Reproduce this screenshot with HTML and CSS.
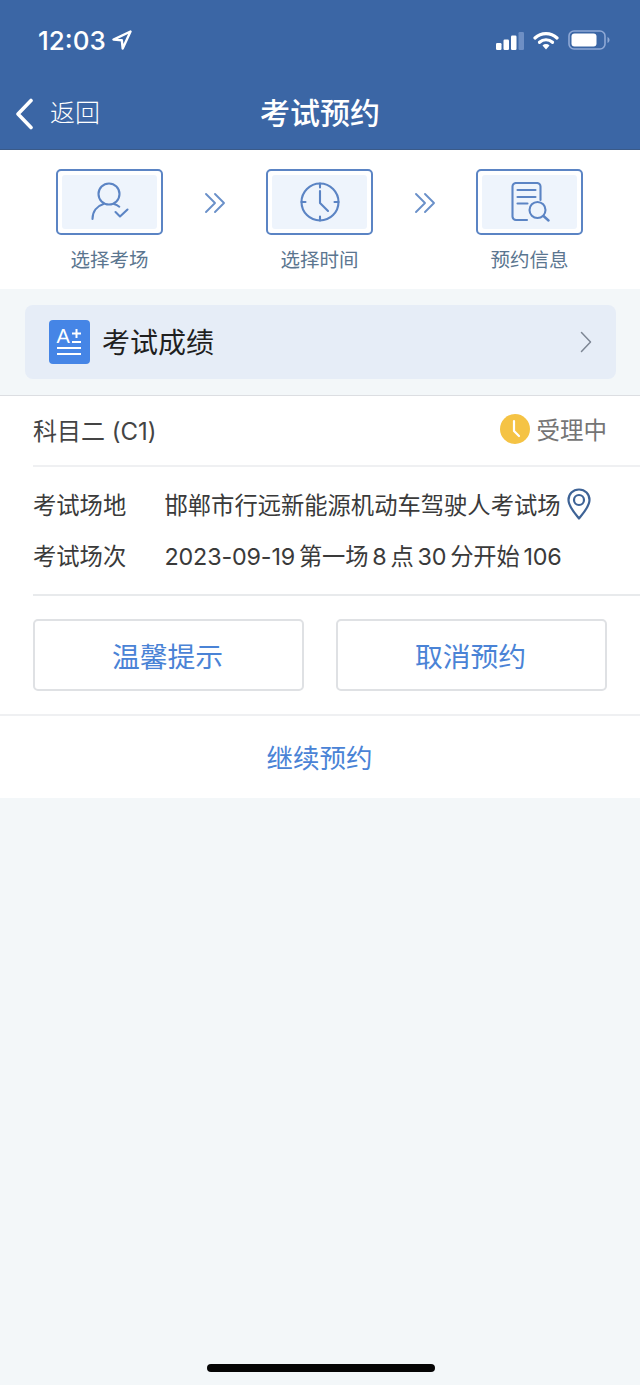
FILE: index.html
```html
<!DOCTYPE html>
<html lang="zh-CN">
<head>
    <meta charset="UTF-8">
    <meta name="viewport" content="width=device-width, initial-scale=1.0">
    <title>考试预约</title>
    <link rel="stylesheet" href="styles.css">
</head>
<body>
    <div class="page">
        <!-- Header -->
        <div class="header">
            <div class="status-bar">
                <div class="status-time">
                    <span>12:03</span>
                    <svg class="icon-location" viewBox="0 0 20 20"><path d="M18.5 1.5 1.5 9.6l8.3.6.9 8.3z" fill="none" stroke="#fff" stroke-width="2.4" stroke-linejoin="round"/></svg>
                </div>
                <div class="status-icons">
                    <svg class="icon-signal" viewBox="0 0 28 18">
                        <rect x="0" y="11" width="5.5" height="7" rx="1.2" fill="#fff"/>
                        <rect x="7.500" y="7.500" width="5.500" height="10.500" rx="1.200" fill="#fff"/>
                        <rect x="15" y="3.500" width="5.500" height="14.500" rx="1.200" fill="#fff"/>
                        <rect x="22.500" y="0" width="5.500" height="18" rx="1.200" fill="#6e8fc4"/>
                    </svg>
                    <svg class="icon-wifi" viewBox="0 0 26 19">
                        <path d="M2 7a16 16 0 0 1 22 0" fill="none" stroke="#fff" stroke-width="3.2" stroke-linecap="round"/>
                        <path d="M6.5 11.3a9.6 9.6 0 0 1 13 0" fill="none" stroke="#fff" stroke-width="3.2" stroke-linecap="round"/>
                        <path d="M9.5 14.5a5 5 0 0 1 7 0L13 18.5z" fill="#fff"/>
                    </svg>
                    <svg class="icon-battery" viewBox="0 0 42 20">
                        <rect x="1" y="1" width="36" height="18" rx="5" fill="none" stroke="#8fa9d6" stroke-width="1.6"/>
                        <rect x="3.5" y="3.5" width="25" height="13" rx="3" fill="#fff"/>
                        <path d="M39.5 7v6c1.2-.5 2-1.7 2-3s-.8-2.500-2-3z" fill="#8fa9d6"/>
                    </svg>
                </div>
            </div>
            <div class="nav-bar">
                <div class="nav-back">
                    <svg class="icon-back" viewBox="0 0 18 32"><path d="M15.500 2.500 2.500 16l13 13.500" fill="none" stroke="#fff" stroke-width="3.600" stroke-linecap="round" stroke-linejoin="round"/></svg>
                    <span>返回</span>
                </div>
                <div class="nav-title">考试预约</div>
            </div>
        </div>

        <!-- Steps -->
        <div class="steps">
            <div class="step">
                <div class="step-box">
                    <div class="step-inner">
                        <svg class="step-icon" viewBox="0 0 40 40">
                            <circle cx="19" cy="12" r="10.500" fill="none" stroke="#5b84c4" stroke-width="2.100"/>
                            <path d="M2.500 37c0-7.500 4.500-13 11-15M24 22c2 .6 3.800 1.500 5.300 2.700" fill="none" stroke="#5b84c4" stroke-width="2.100" stroke-linecap="round"/>
                            <path d="M25.500 30l4.500 4.500 7.500-7" fill="none" stroke="#5b84c4" stroke-width="2.100" stroke-linecap="round" stroke-linejoin="round"/>
                        </svg>
                    </div>
                </div>
                <div class="step-label">选择考场</div>
            </div>
            <svg class="step-arrow" viewBox="0 0 22 22"><path d="M2 2l9 9-9 9M11 2l9 9-9 9" fill="none" stroke="#6a90c9" stroke-width="1.900" stroke-linecap="round" stroke-linejoin="round"/></svg>
            <div class="step">
                <div class="step-box">
                    <div class="step-inner">
                        <svg class="step-icon" viewBox="0 0 40 40">
                            <circle cx="20" cy="20" r="18.500" fill="none" stroke="#5b84c4" stroke-width="2.100"/>
                            <path d="M20 1.500v4M20 34.500v4M1.500 20h4M34.500 20h4M20 9v12l8 8" fill="none" stroke="#5b84c4" stroke-width="2.100" stroke-linecap="round" stroke-linejoin="round"/>
                        </svg>
                    </div>
                </div>
                <div class="step-label">选择时间</div>
            </div>
            <svg class="step-arrow" viewBox="0 0 22 22"><path d="M2 2l9 9-9 9M11 2l9 9-9 9" fill="none" stroke="#6a90c9" stroke-width="1.900" stroke-linecap="round" stroke-linejoin="round"/></svg>
            <div class="step">
                <div class="step-box">
                    <div class="step-inner">
                        <svg class="step-icon" viewBox="0 0 40 40">
                            <path d="M17 38H6a3.500 3.500 0 0 1-3.500-3.500v-30A3.500 3.500 0 0 1 6 1h21a3.500 3.500 0 0 1 3.500 3.500V18" fill="none" stroke="#5b84c4" stroke-width="2.100" stroke-linecap="round"/>
                            <path d="M7.500 8h18M7.500 15h18M7.500 21.500h10" fill="none" stroke="#5b84c4" stroke-width="2.100" stroke-linecap="round"/>
                            <circle cx="27.500" cy="28" r="8" fill="none" stroke="#5b84c4" stroke-width="2.100"/>
                            <path d="M33.500 34l5 4.500" fill="none" stroke="#5b84c4" stroke-width="2.400" stroke-linecap="round"/>
                        </svg>
                    </div>
                </div>
                <div class="step-label">预约信息</div>
            </div>
        </div>

        <!-- Score banner -->
        <div class="score-wrap">
            <div class="score-banner">
                <div class="score-icon">
                    <svg viewBox="0 0 41 44">
                        <text class="score-icon-text" x="7.500" y="23">A</text>
                        <path d="M23 13.500h9M27.500 9v9M23 22h9M8 28h24M8 34h24" fill="none" stroke="#fff" stroke-width="2"/>
                    </svg>
                </div>
                <div class="score-title">考试成绩</div>
                <svg class="score-chevron" viewBox="0 0 12 22"><path d="M1.500 1.500 10.500 11l-9 9.500" fill="none" stroke="#7d8694" stroke-width="1.500" stroke-linecap="round" stroke-linejoin="round"/></svg>
            </div>
        </div>

        <!-- Booking card -->
        <div class="card">
            <div class="card-head">
                <div class="card-subject">科目二 (C1)</div>
                <div class="card-status">
                    <svg class="icon-pending" viewBox="0 0 30 30">
                        <circle cx="15" cy="15" r="15" fill="#f5c344"/>
                        <path d="M14 7v10l5 5" fill="none" stroke="#fff" stroke-width="2.200" stroke-linecap="round" stroke-linejoin="round"/>
                    </svg>
                    <span>受理中</span>
                </div>
            </div>
            <div class="card-info">
                <div class="info-row">
                    <div class="info-label">考试场地</div>
                    <div class="info-value">邯郸市行远新能源机动车驾驶人考试场</div>
                    <svg class="icon-pin" viewBox="0 0 24 32">
                        <path d="M12 1.500C5.800 1.500 1.500 6.200 1.500 12c0 6.500 6 13 10.500 18.500C16.500 25 22.500 18.500 22.500 12c0-5.800-4.300-10.500-10.500-10.500z" fill="none" stroke="#3e6396" stroke-width="2.200" stroke-linejoin="round"/>
                        <circle cx="12" cy="12" r="5" fill="none" stroke="#3e6396" stroke-width="2.200"/>
                    </svg>
                </div>
                <div class="info-row">
                    <div class="info-label">考试场次</div>
                    <div class="info-value date-value">2023-09-19 第一场 8 点 30 分开始 106</div>
                </div>
            </div>
            <div class="card-actions">
                <div class="btn">温馨提示</div>
                <div class="btn">取消预约</div>
            </div>
            <div class="card-more">继续预约</div>
        </div>

        <div class="home-indicator"></div>
    </div>
</body>
</html>
```

FILE: styles.css
```css
* {
    box-sizing: border-box;
}
html, body {
    margin: 0;
    padding: 0;
}
body {
    font-family: "Inter", "Noto Sans CJK SC", sans-serif;
    background: #f3f7f9;
    color: #333;
}
.page {
    width: 640px;
    height: 1385px;
    position: relative;
    overflow: hidden;
}

/* Header */
.header {
    height: 150px;
    background: #3b66a5;
    color: #fff;
    border-bottom: 1px solid #3a5a88;
}
.status-bar {
    height: 80px;
    display: flex;
    justify-content: space-between;
    align-items: center;
    padding: 0 30px 0 38px;
}
.status-time {
    display: flex;
    align-items: center;
    gap: 6px;
    font-size: 26px;
    font-weight: 500;
}
.icon-location {
    width: 20px;
    height: 20px;
}
.status-icons {
    display: flex;
    align-items: center;
    gap: 9px;
}
.icon-signal {
    width: 28px;
    height: 18px;
    margin-top: 2px;
}
.icon-wifi {
    width: 26px;
    height: 19px;
}
.icon-battery {
    width: 42px;
    height: 20px;
}
.nav-bar {
    height: 69px;
    display: flex;
    align-items: center;
    position: relative;
    padding: 0 0 7px 15px;
}
.nav-back {
    display: flex;
    align-items: center;
    gap: 16px;
    font-size: 25px;
    font-weight: 300;
}
.icon-back {
    width: 19px;
    height: 32px;
    margin-top: 5px;
}
.nav-title {
    position: absolute;
    left: 0;
    right: 0;
    text-align: center;
    font-size: 30px;
    font-weight: 500;
}

/* Steps */
.steps {
    height: 139px;
    background: #fff;
    display: flex;
    justify-content: center;
    padding: 19px 1px 0 0;
    gap: 40.500px;
}
.step {
    width: 107px;
    display: flex;
    flex-direction: column;
    align-items: center;
}
.step-box {
    width: 107px;
    height: 66px;
    border: 2px solid #5b84c4;
    border-radius: 5px;
    padding: 4px;
    background: #fff;
}
.step-inner {
    height: 100%;
    background: #eef4fc;
    border-radius: 3px;
    display: flex;
    align-items: center;
    justify-content: center;
}
.step-icon {
    width: 40px;
    height: 40px;
}
.step-label {
    margin-top: 12px;
    font-size: 19.500px;
    line-height: 26px;
    white-space: nowrap;
    color: #5b7690;
}
.step-arrow {
    width: 22px;
    height: 22px;
    margin-top: 23px;
    flex-shrink: 0;
}

/* Score banner */
.score-wrap {
    height: 107px;
    padding: 16px 24px 0 25px;
    border-bottom: 1px solid #dcdee2;
}
.score-banner {
    height: 74px;
    background: #e6edf7;
    border-radius: 8px;
    display: flex;
    align-items: center;
    padding: 0 24px;
}
.score-icon {
    width: 41px;
    height: 44px;
    background: #4585e6;
    border-radius: 4px;
    flex-shrink: 0;
}
.score-icon svg {
    display: block;
    width: 100%;
    height: 100%;
}
.score-icon-text {
    font-family: "Liberation Sans", sans-serif;
    font-size: 20px;
    fill: #fff;
}
.score-title {
    margin: 0 0 2px 12px;
    font-size: 28px;
    color: #1f1f1f;
    flex: 1;
}
.score-chevron {
    width: 12px;
    height: 22px;
}

/* Booking card */
.card {
    background: #fff;
}
.card-head {
    height: 71px;
    margin-left: 33px;
    padding: 0 33px 3px 0;
    display: flex;
    justify-content: space-between;
    align-items: center;
    border-bottom: 2px solid #eff0f2;
}
.card-subject {
    font-size: 24px;
    color: #444;
}
.card-status {
    display: flex;
    align-items: center;
    gap: 7px;
    font-size: 23.500px;
    color: #757575;
}
.icon-pending {
    width: 30px;
    height: 30px;
}
.card-info {
    height: 129px;
    margin-left: 33px;
    padding-top: 11px;
    border-bottom: 2px solid #e8eaec;
}
.info-row {
    height: 51px;
    display: flex;
    align-items: center;
    font-size: 23.300px;
    color: #3a3a3a;
    white-space: nowrap;
}
.info-label {
    width: 131.500px;
    flex-shrink: 0;
}
.date-value {
    word-spacing: -2.500px;
    letter-spacing: -0.15px;
}
.icon-pin {
    width: 24px;
    height: 32px;
    margin-left: 6px;
    flex-shrink: 0;
}
.card-actions {
    height: 120px;
    padding: 23px 33px 0;
    display: flex;
    justify-content: space-between;
    border-bottom: 2px solid #eff0f2;
}
.btn {
    width: 271px;
    height: 72px;
    padding-right: 2px;
    border: 2px solid #dfe1e4;
    border-radius: 5px;
    display: flex;
    align-items: center;
    justify-content: center;
    font-size: 27.800px;
    color: #4a83d6;
}
.card-more {
    height: 82px;
    padding: 0 1px 2px 0;
    display: flex;
    align-items: center;
    justify-content: center;
    font-size: 26.500px;
    color: #4a83d6;
}

.home-indicator {
    position: absolute;
    left: 207px;
    bottom: 13px;
    width: 228px;
    height: 8px;
    border-radius: 4px;
    background: #050505;
}
```
